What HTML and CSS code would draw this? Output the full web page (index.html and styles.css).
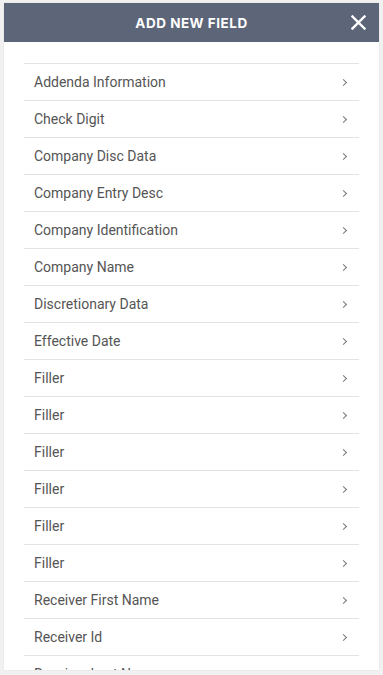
FILE: index.html
```html
<!DOCTYPE html>
<html lang="en">
<head>
  <meta charset="UTF-8" />
  <meta name="viewport" content="width=device-width, initial-scale=1">
  <title>Add New Field</title>
  <link rel="stylesheet" href="styles.css">
</head>
<body>
  <div class="panel">
    <div class="panel-header">
      <h2>ADD NEW FIELD</h2>
      <button class="close" type="button" aria-label="Close">
        <svg width="15" height="15" viewBox="0 0 15 15"><path d="M1.5 1.5 L13.5 13.5 M13.5 1.5 L1.5 13.5" stroke="#fff" stroke-width="2.4" stroke-linecap="square"/></svg>
      </button>
    </div>
    <ul class="field-list">
      <li>Addenda Information<span class="chev"></span></li>
      <li>Check Digit<span class="chev"></span></li>
      <li>Company Disc Data<span class="chev"></span></li>
      <li>Company Entry Desc<span class="chev"></span></li>
      <li>Company Identification<span class="chev"></span></li>
      <li>Company Name<span class="chev"></span></li>
      <li>Discretionary Data<span class="chev"></span></li>
      <li>Effective Date<span class="chev"></span></li>
      <li>Filler<span class="chev"></span></li>
      <li>Filler<span class="chev"></span></li>
      <li>Filler<span class="chev"></span></li>
      <li>Filler<span class="chev"></span></li>
      <li>Filler<span class="chev"></span></li>
      <li>Filler<span class="chev"></span></li>
      <li>Receiver First Name<span class="chev"></span></li>
      <li>Receiver Id<span class="chev"></span></li>
      <li>Receiver Last Name<span class="chev"></span></li>
      <li>Service Class Code<span class="chev"></span></li>
    </ul>
  </div>
</body>
</html>
```
FILE: styles.css
```css
*, *::before, *::after { box-sizing: border-box; }
html, body { height: 100%; }
body {
  margin: 0;
  padding: 3px 4px 5px;
  background: #f1f1f1;
  font-family: Roboto, 'Liberation Sans', sans-serif;
  overflow: hidden;
}
.panel {
  background: #fff;
  height: 100%;
  overflow: hidden;
  box-shadow: 0 0 1px rgba(0,0,0,.15);
}

/* header */
.panel-header {
  height: 39px;
  background: #5d6578;
  display: flex; align-items: center; justify-content: center;
  position: relative;
}
.panel-header h2 {
  margin: 0;
  color: #fff;
  font-family: Inter, 'Open Sans', sans-serif;
  font-size: 13.5px; font-weight: 700;
  letter-spacing: .5px;
}
.close {
  position: absolute; right: 12px; top: 11px;
  width: 17px; height: 17px;
  padding: 1px; border: none; background: none;
  display: flex; align-items: center; justify-content: center;
  cursor: pointer;
}

/* list */
.field-list {
  list-style: none;
  margin: 21px 20px 0;
  padding: 0;
  border-top: 1px solid #e3e3e3;
}
.field-list li {
  height: 37px;
  display: flex; align-items: center; justify-content: space-between;
  padding: 0 10px;
  border-bottom: 1px solid #e3e3e3;
  font-size: 14px;
  color: #555;
}
.chev {
  width: 5px; height: 5px;
  margin-right: 3px;
  border-top: 1.2px solid #777;
  border-right: 1.2px solid #777;
  transform: rotate(45deg);
}
```
